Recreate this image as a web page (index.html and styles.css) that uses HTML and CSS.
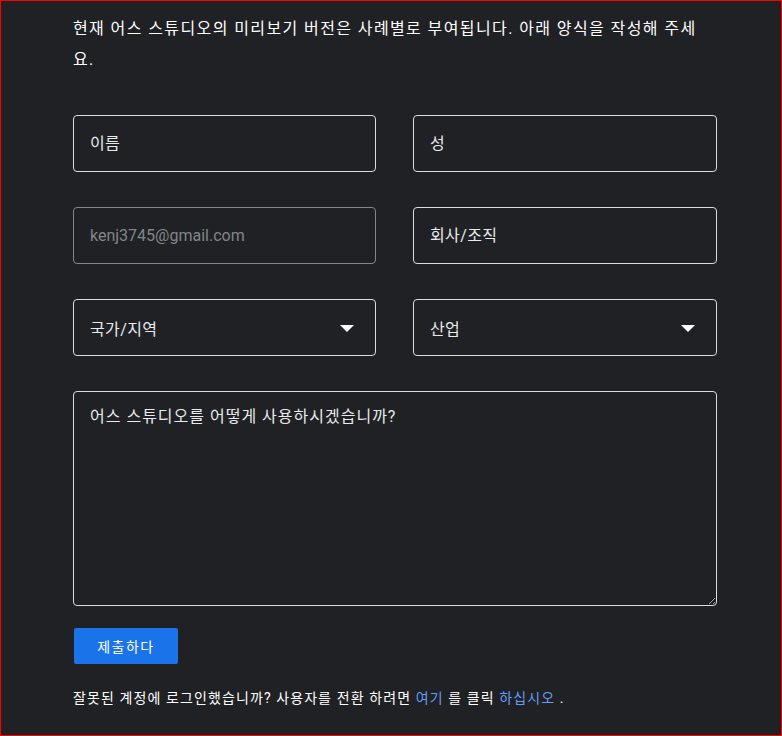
FILE: index.html
```html
<!DOCTYPE html>
<html lang="ko">
<head>
<meta charset="utf-8">
<link rel="stylesheet" href="styles.css">
</head>
<body>
<main class="page">
  <p class="intro">현재 어스 스튜디오의 미리보기 버전은 사례별로 부여됩니다. 아래 양식을 작성해 주세요.</p>
  <form class="form">
    <div class="grid">
      <input class="field" type="text" placeholder="이름">
      <input class="field" type="text" placeholder="성">
      <input class="field field-disabled" type="text" value="kenj3745@gmail.com" disabled>
      <input class="field" type="text" placeholder="회사/조직">
      <div class="field select"><span>국가/지역</span><span class="arrow"></span></div>
      <div class="field select"><span>산업</span><span class="arrow"></span></div>
    </div>
    <textarea class="area" placeholder="어스 스튜디오를 어떻게 사용하시겠습니까?"></textarea>
    <button class="submit" type="button">제출하다</button>
  </form>
  <p class="switch">잘못된 계정에 로그인했습니까? 사용자를 전환 하려면 <a class="link" href="#">여기</a> 를 클릭 <a class="link" href="#">하십시오</a> .</p>
</main>
</body>
</html>
```

FILE: styles.css
```css
html, body {
  margin: 0;
  padding: 0;
}
body {
  width: 782px;
  height: 736px;
  box-sizing: border-box;
  border: 1px solid #ff0000;
  background: #202124;
  font-family: Roboto, "Noto Sans CJK KR", sans-serif;
  color: #e8eaed;
  overflow: hidden;
}
.page {
  padding: 12px 0 0 72px;
  width: 644px;
}
.intro {
  margin: 0;
  font-size: 16px;
  line-height: 31px;
  letter-spacing: 1.4px;
  color: #ffffff;
  width: 632px;
}
.form {
  margin-top: 40px;
  display: flex;
  flex-direction: column;
  align-items: flex-start;
}
.grid {
  display: grid;
  grid-template-columns: 303px 304px;
  column-gap: 37px;
  row-gap: 35px;
}
.field {
  box-sizing: border-box;
  height: 57px;
  margin: 0;
  border: 1px solid #dadce0;
  border-radius: 4px;
  background: transparent;
  padding: 0 16px;
  font-family: Roboto, "Noto Sans CJK KR", sans-serif;
  font-size: 16px;
  letter-spacing: 0.4px;
  color: #e8eaed;
  outline: none;
}
.field::placeholder {
  color: #e8eaed;
  opacity: 1;
}
.field-disabled {
  border-color: #80868b;
  color: #80868b;
  letter-spacing: 0;
}
.select {
  display: flex;
  align-items: center;
  justify-content: space-between;
  padding-right: 21px;
}
.arrow {
  width: 0;
  height: 0;
  border-left: 7px solid transparent;
  border-right: 7px solid transparent;
  border-top: 7px solid #ffffff;
  margin-top: 2px;
}
.area {
  box-sizing: border-box;
  margin-top: 35px;
  width: 644px;
  height: 215px;
  border: 1px solid #dadce0;
  border-radius: 4px;
  background: transparent;
  padding: 14px 16px;
  font-family: Roboto, "Noto Sans CJK KR", sans-serif;
  font-size: 16px;
  line-height: 22px;
  letter-spacing: 1px;
  color: #e8eaed;
  outline: none;
}
.area::placeholder {
  color: #e8eaed;
  opacity: 1;
}
.submit {
  margin: 22px 0 0 1px;
  width: 104px;
  height: 36px;
  border: none;
  border-radius: 2px;
  background: #1a73e8;
  color: #ffffff;
  font-family: Roboto, "Noto Sans CJK KR", sans-serif;
  font-size: 14px;
  letter-spacing: 1.5px;
  padding: 0;
}
.switch {
  margin: 24px 0 0 0;
  font-size: 14px;
  line-height: 20px;
  letter-spacing: 1.1px;
  color: #ffffff;
}
.link {
  color: #669df6;
  text-decoration: none;
}
```
